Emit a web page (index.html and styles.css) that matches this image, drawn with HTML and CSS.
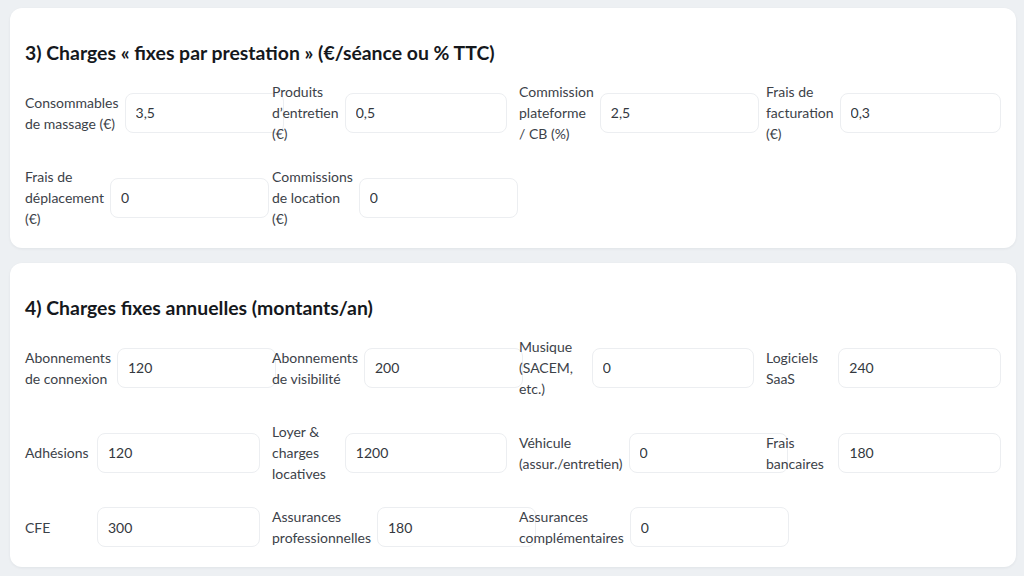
FILE: index.html
```html
<!DOCTYPE html>
<html lang="fr">
<head>
<meta charset="utf-8">
<title>Charges</title>
<link rel="stylesheet" href="styles.css">
</head>
<body>
<main class="page">
  <section class="card">
    <h2 class="card-title">3) Charges « fixes par prestation » (€/séance ou % TTC)</h2>
    <div class="fields">
      <label class="field"><span class="field-label">Consommables de massage (€)</span><input class="field-input" type="text" value="3,5"></label>
      <label class="field"><span class="field-label">Produits d’entretien (€)</span><input class="field-input" type="text" value="0,5"></label>
      <label class="field"><span class="field-label">Commission plateforme / CB (%)</span><input class="field-input" type="text" value="2,5"></label>
      <label class="field"><span class="field-label">Frais de facturation (€)</span><input class="field-input" type="text" value="0,3"></label>
      <label class="field"><span class="field-label">Frais de déplacement (€)</span><input class="field-input" type="text" value="0"></label>
      <label class="field"><span class="field-label">Commissions de location (€)</span><input class="field-input" type="text" value="0"></label>
    </div>
  </section>

  <section class="card">
    <h2 class="card-title">4) Charges fixes annuelles (montants/an)</h2>
    <div class="fields">
      <label class="field"><span class="field-label">Abonnements de connexion</span><input class="field-input" type="text" value="120"></label>
      <label class="field"><span class="field-label">Abonnements de visibilité</span><input class="field-input" type="text" value="200"></label>
      <label class="field"><span class="field-label">Musique (SACEM, etc.)</span><input class="field-input" type="text" value="0"></label>
      <label class="field"><span class="field-label">Logiciels SaaS</span><input class="field-input" type="text" value="240"></label>
      <label class="field"><span class="field-label">Adhésions</span><input class="field-input" type="text" value="120"></label>
      <label class="field"><span class="field-label">Loyer &amp; charges locatives</span><input class="field-input" type="text" value="1200"></label>
      <label class="field"><span class="field-label">Véhicule (assur./entretien)</span><input class="field-input" type="text" value="0"></label>
      <label class="field"><span class="field-label">Frais bancaires</span><input class="field-input" type="text" value="180"></label>
      <label class="field"><span class="field-label">CFE</span><input class="field-input" type="text" value="300"></label>
      <label class="field"><span class="field-label">Assurances professionnelles</span><input class="field-input" type="text" value="180"></label>
      <label class="field"><span class="field-label">Assurances complémentaires</span><input class="field-input" type="text" value="0"></label>
    </div>
  </section>
</main>
</body>
</html>
```

FILE: styles.css
```css
* {
  box-sizing: border-box;
}

html, body {
  margin: 0;
  background: #edf0f3;
}

body {
  font-family: Lato, "Noto Sans", sans-serif;
  color: #1f2328;
}

.page {
  display: flex;
  flex-direction: column;
  gap: 15px;
  padding: 8px 8px 8px 10px;
}

.card {
  background: #ffffff;
  border-radius: 12px;
  box-shadow: 0 1px 3px rgba(20, 30, 45, 0.06);
  padding: 31px 15px 19px;
}

.card-title {
  margin: 0 0 15px;
  font-size: 19.4px;
  line-height: 27px;
  font-weight: 700;
  color: #15181c;
}

.fields {
  display: grid;
  grid-template-columns: repeat(4, 1fr);
  column-gap: 12px;
  row-gap: 22px;
}

.field {
  display: flex;
  align-items: center;
  gap: 6px;
  min-width: 0;
}

/* the label takes whatever the input leaves free, down to its longest word */
.field-label {
  flex: 1 100 auto;
  font-size: 14px;
  line-height: 21px;
  color: #3c4249;
}

.field-input {
  flex: 0 1 163px;
  width: 163px;
  min-width: 159px;
  height: 40px;
  padding: 0 10px;
  border: 1px solid #eceef1;
  border-radius: 8px;
  background: #ffffff;
  font-family: inherit;
  font-size: 14px;
  color: #33383e;
  outline: none;
}
```
